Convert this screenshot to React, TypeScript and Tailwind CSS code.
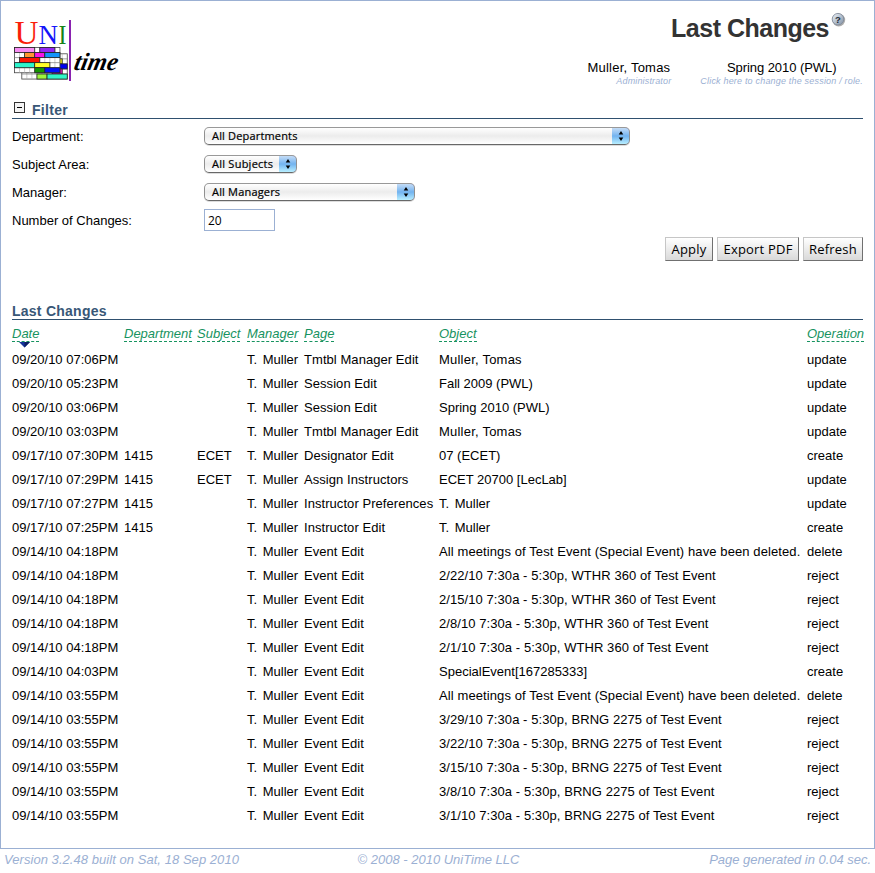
import React from "react";

const ROWS: string[][] = [
  ["09/20/10 07:06PM", "", "", "Tmtbl Manager Edit", "Muller, Tomas", "update"],
  ["09/20/10 05:23PM", "", "", "Session Edit", "Fall 2009 (PWL)", "update"],
  ["09/20/10 03:06PM", "", "", "Session Edit", "Spring 2010 (PWL)", "update"],
  ["09/20/10 03:03PM", "", "", "Tmtbl Manager Edit", "Muller, Tomas", "update"],
  ["09/17/10 07:30PM", "1415", "ECET", "Designator Edit", "07 (ECET)", "create"],
  ["09/17/10 07:29PM", "1415", "ECET", "Assign Instructors", "ECET 20700 [LecLab]", "update"],
  ["09/17/10 07:27PM", "1415", "", "Instructor Preferences", "T. Muller", "update"],
  ["09/17/10 07:25PM", "1415", "", "Instructor Edit", "T. Muller", "create"],
  ["09/14/10 04:18PM", "", "", "Event Edit", "All meetings of Test Event (Special Event) have been deleted.", "delete"],
  ["09/14/10 04:18PM", "", "", "Event Edit", "2/22/10 7:30a - 5:30p, WTHR 360 of Test Event", "reject"],
  ["09/14/10 04:18PM", "", "", "Event Edit", "2/15/10 7:30a - 5:30p, WTHR 360 of Test Event", "reject"],
  ["09/14/10 04:18PM", "", "", "Event Edit", "2/8/10 7:30a - 5:30p, WTHR 360 of Test Event", "reject"],
  ["09/14/10 04:18PM", "", "", "Event Edit", "2/1/10 7:30a - 5:30p, WTHR 360 of Test Event", "reject"],
  ["09/14/10 04:03PM", "", "", "Event Edit", "SpecialEvent[167285333]", "create"],
  ["09/14/10 03:55PM", "", "", "Event Edit", "All meetings of Test Event (Special Event) have been deleted.", "delete"],
  ["09/14/10 03:55PM", "", "", "Event Edit", "3/29/10 7:30a - 5:30p, BRNG 2275 of Test Event", "reject"],
  ["09/14/10 03:55PM", "", "", "Event Edit", "3/22/10 7:30a - 5:30p, BRNG 2275 of Test Event", "reject"],
  ["09/14/10 03:55PM", "", "", "Event Edit", "3/15/10 7:30a - 5:30p, BRNG 2275 of Test Event", "reject"],
  ["09/14/10 03:55PM", "", "", "Event Edit", "3/8/10 7:30a - 5:30p, BRNG 2275 of Test Event", "reject"],
  ["09/14/10 03:55PM", "", "", "Event Edit", "3/1/10 7:30a - 5:30p, BRNG 2275 of Test Event", "reject"],
];

const COLUMNS = ["Date", "Department", "Subject", "Manager", "Page", "Object", "Operation"];
const GRID = "grid grid-cols-[112px_73px_50px_57px_135px_368px_60px] whitespace-nowrap";

// Letter spacing of an object description, by the kind of text it holds.
function objectTracking(text: string) {
  if (text.startsWith("All meetings")) return "tracking-[0.1px]";
  if (text.startsWith("Muller")) return "tracking-[0.22px]";
  if (text.startsWith("T. ")) return "[word-spacing:2px]";
  if (text.includes("Test Event")) return "tracking-[0.07px]";
  return "";
}

// Logo blocks: column, row, number of columns, colour.
const BACK: [number, number, number, string][] = [
  [7, 1, 1, "#f5ee1e"],
  [7, 2, 2, "#0000f0"],
  [6, 3, 2, "#ec14cf"],
  [3, 4, 2, "#9cf53c"],
  [5, 4, 4, "#30f5c8"],
];
const FRONT: [number, number, number, string][] = [
  [0, 0, 4, "#f78cf2"],
  [5, 0, 3, "#9428f2"],
  [2, 1, 2, "#ff9632"],
  [4, 1, 2, "#f714e6"],
  [6, 1, 3, "#1494fa"],
  [1, 2, 4, "#fa1400"],
  [0, 3, 4, "#2cf5cc"],
  [4, 3, 3, "#ffff28"],
  [4, 4, 2, "#149600"],
  [6, 4, 3, "#0010fa"],
];

function Board({ x, y, blocks }: { x: number; y: number; blocks: [number, number, number, string][] }) {
  const w = 5.05;
  return (
    <g transform={`translate(${x} ${y})`}>
      <rect width={w * 9} height={w * 5} fill="#fff" stroke="#444" strokeWidth=".8" />
      {[1, 2, 3, 4, 5, 6, 7, 8].map((i) => (
        <path key={i} d={`M${i * w} 0V${w * 5}`} stroke="#aaa" strokeWidth=".6" />
      ))}
      {[1, 2, 3, 4].map((i) => (
        <path key={i} d={`M0 ${i * w}H${w * 9}`} stroke="#777" strokeWidth=".7" />
      ))}
      {blocks.map(([c, r, n, f], i) => (
        <rect key={i} x={c * w} y={r * w} width={n * w} height={w} fill={f} stroke="#222" strokeWidth=".8" />
      ))}
    </g>
  );
}

function Logo() {
  return (
    <svg width="112" height="82" viewBox="12 2 112 82" className="block shrink-0">
      <g fontFamily="'Liberation Serif', serif">
        <text x="14.5" y="43.5" fontSize="34" textLength="24" lengthAdjust="spacingAndGlyphs" fill="#fa1e0a">U</text>
        <text x="38.5" y="43.5" fontSize="27" textLength="19.5" lengthAdjust="spacingAndGlyphs" fill="#1414fa">N</text>
        <text x="58.5" y="43.5" fontSize="27" textLength="8" lengthAdjust="spacingAndGlyphs" fill="#148214">I</text>
      </g>
      <Board x={21.8} y={53.8} blocks={BACK} />
      <Board x={14.5} y={47.5} blocks={FRONT} />
      <rect x="69" y="20" width="2" height="61" fill="#8a22b0" />
      <text transform="translate(73 69.5) skewX(-12)" fontFamily="'Liberation Serif', serif" fontStyle="italic" fontWeight="bold" fontSize="25" textLength="43.5" lengthAdjust="spacingAndGlyphs" fill="#000">time</text>
    </svg>
  );
}

function Select({ label, width, tracking }: { label: string; width: string; tracking: string }) {
  return (
    <div
      className={`flex h-[18px] ${width} overflow-hidden rounded-[5px] border border-t-[#999] border-x-[#909090] border-b-[#686868] bg-linear-to-b from-white via-[#ececec] to-white shadow-[0_1px_0_#ddd]`}
    >
      <span className={`flex-1 whitespace-nowrap pl-[7px] font-['Open_Sans',sans-serif] text-[11px] leading-4 ${tracking} text-black [-webkit-text-stroke:0.2px_black]`}>{label}</span>
      <span className="-my-px -mr-px flex w-[18px] items-center justify-center rounded-r-[5px] border border-l-0 border-t-[#3b50a2] border-r-[#4662a0] border-b-[#596b86] bg-linear-to-b from-[#c4dcf6] via-[#72b3ef] to-[#b8efff]">
        <svg width="6" height="10" viewBox="0 0 6 10">
          <path d="M3 0L5.3 3.5H.7ZM3 10L.7 6.5H5.3Z" fill="#000" />
        </svg>
      </span>
    </div>
  );
}

function Field({ label, children }: { label: string; children: React.ReactNode }) {
  return (
    <div className="flex h-7 items-center">
      <span className="w-48 pt-[2px]">{label}</span>
      {children}
    </div>
  );
}

function Button({ label, width }: { label: string; width: string }) {
  return (
    <button
      className={`h-6 ${width} whitespace-nowrap border border-t-[#c6c6c6] border-l-[#c6c6c6] border-r-[#707070] border-b-[#707070] bg-linear-to-b from-white to-[#d9d9d9] font-['Open_Sans',sans-serif] text-[13px] leading-[22px] tracking-[0.2px] text-black`}
    >
      {label}
    </button>
  );
}

export default function App() {
  return (
    <div className="h-[873px] w-[875px] overflow-hidden bg-white font-['Liberation_Sans',Arial,sans-serif] text-[13px] leading-4 text-black">
      <div className="h-[849px] border border-[#9bb0d3] px-[11px]">
        <header className="flex h-[99px] justify-between pt-px">
          <Logo />
          <div className="flex flex-col items-end">
            <div className="mt-[9px] flex items-start pr-[17px]">
              <h1 className="mt-[2px] text-[25px] leading-[30px] font-bold tracking-[-0.5px] text-[#333]">Last Changes</h1>
              <svg width="16" height="16" viewBox="0 0 16 16" className="ml-px">
                <defs>
                  <linearGradient id="help" x1="0" y1="0" x2="1" y2="1">
                    <stop offset="0" stopColor="#eef4fa" />
                    <stop offset="1" stopColor="#7f8fa4" />
                  </linearGradient>
                </defs>
                <circle cx="8.7" cy="9" r="6.5" fill="#777" opacity=".6" />
                <circle cx="8" cy="8.2" r="5.8" fill="url(#help)" stroke="#7c8796" strokeWidth=".8" />
                <text x="8" y="11.7" textAnchor="middle" fontSize="9.5" fontWeight="bold" fontFamily="'Liberation Sans', sans-serif" fill="#222c38">?</text>
              </svg>
            </div>
            <div className="mt-[17px] flex whitespace-nowrap">
              <div className="mr-[29px] flex flex-col items-end">
                <span className="pr-[1px] tracking-[0.22px]">Muller, Tomas</span>
                <span className="-mt-px text-[9px] leading-3 tracking-[0.15px] text-[#9bb0d3] italic">Administrator</span>
              </div>
              <div className="flex flex-col items-center">
                <span className="tracking-[-0.06px]">Spring 2010 (PWL)</span>
                <span className="-mt-px text-[9px] leading-3 tracking-[0.19px] text-[#9bb0d3] italic">Click here to change the session / role.</span>
              </div>
            </div>
          </div>
        </header>

        <div className="flex h-[19px] border-b border-[#2f506f]">
          <svg width="12" height="12" viewBox="0 0 12 12" className="mt-[2px] mr-[6px] ml-[2px]">
            <rect x=".5" y=".5" width="10" height="10" fill="#f4f4f4" stroke="#333" />
            <path d="M3 5.5H8" stroke="#000" />
          </svg>
          <h2 className="pt-[2px] text-[14px] leading-4 font-bold tracking-[0.3px] text-[#385777]">Filter</h2>
        </div>

        <div className="pt-[3px]">
          <Field label="Department:"><Select label="All Departments" width="w-[426px]" tracking="tracking-[0.17px]" /></Field>
          <Field label="Subject Area:"><Select label="All Subjects" width="w-[93px]" tracking="tracking-[0.25px]" /></Field>
          <Field label="Manager:"><Select label="All Managers" width="w-[211px]" tracking="tracking-[0.18px]" /></Field>
          <Field label="Number of Changes:">
            <input defaultValue="20" className="h-[22px] w-[71px] border border-[#9bb0d3] px-[3px] font-['Open_Sans',sans-serif] text-[12px] text-black outline-none" />
          </Field>
        </div>

        <div className="flex h-[68px] justify-end gap-1 pt-[3px]">
          <Button label="Apply" width="w-12" />
          <Button label="Export PDF" width="w-[82px]" />
          <Button label="Refresh" width="w-[60px]" />
        </div>

        <h2 className="h-[18px] border-b border-[#2f506f] pt-px text-[14px] leading-4 font-bold tracking-[0.25px] text-[#385777]">Last Changes</h2>

        <div className={`${GRID} h-[28px] pt-[6px] text-[#179360] italic`}>
          {COLUMNS.map((c) => (
            <div key={c}>
              <span className="inline-block h-[16px] border-b border-dashed border-[#179360]">{c}</span>
              {c === "Date" && (
                <svg width="11" height="6" viewBox="0 0 11 6" className="ml-[7px] block">
                  <path d="M0 0H11L5.5 5.5Z" fill="#15339b" />
                  <path d="M5.5 0H11L5.5 5.5Z" fill="#0b1f60" />
                </svg>
              )}
            </div>
          ))}
        </div>
        {ROWS.map(([date, dept, subj, page, obj, op], i) => (
          <div key={i} className={`${GRID} h-6 leading-6`}>
            <span>{date}</span>
            <span>{dept}</span>
            <span>{subj}</span>
            <span className="[word-spacing:2px]">T. Muller</span>
            <span className="tracking-[0.06px]">{page}</span>
            <span className={objectTracking(obj)}>{obj}</span>
            <span>{op}</span>
          </div>
        ))}
      </div>
      <footer className="grid grid-cols-3 px-1 pt-[3px] text-[#9bb0d3] italic">
        <span className="tracking-[0.05px]">Version 3.2.48 built on Sat, 18 Sep 2010</span>
        <span className="pl-[2px] text-center">© 2008 - 2010 UniTime LLC</span>
        <span className="text-right tracking-[-0.03px]">Page generated in 0.04 sec.</span>
      </footer>
    </div>
  );
}
